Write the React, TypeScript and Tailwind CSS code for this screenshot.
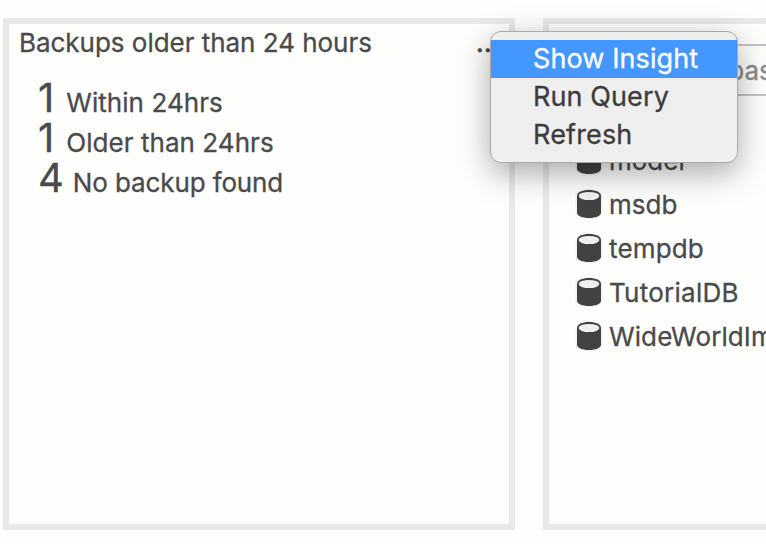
import React from "react";

const insights = [
  { count: "1", label: "Within 24hrs", gap: "gap-[12px]", spacing: "tracking-[0.05px]" },
  { count: "1", label: "Older than 24hrs", gap: "gap-[12px]", spacing: "tracking-[0.05px]" },
  { count: "4", label: "No backup found", gap: "gap-[9px]", spacing: "tracking-[-0.12px]" },
];

const databases = [
  { name: "master", spacing: "tracking-normal" },
  { name: "model", spacing: "tracking-normal" },
  { name: "msdb", spacing: "tracking-normal" },
  { name: "tempdb", spacing: "tracking-[0.15px]" },
  { name: "TutorialDB", spacing: "tracking-[0.25px]" },
  { name: "WideWorldImporters", spacing: "tracking-[0.1px]" },
];

function DatabaseIcon() {
  return (
    <svg className="h-7 w-6 shrink-0 overflow-visible" viewBox="0 0 24 28">
      <path d="M0 6C0 2.200 5 0 12 0s12 2.200 12 6v16.500C24 25.800 19 28 12 28S0 25.800 0 22.500Z" fill="#424242" stroke="#f3f2f4" strokeWidth="3" paintOrder="stroke" />
      <ellipse cx="12" cy="6" rx="10.300" ry="4.100" fill="#f0eff1" />
    </svg>
  );
}

function ContextMenu() {
  return (
    <div className="absolute left-[490px] top-[31px] h-[132px] w-[248px] rounded-[11px] border border-[#aaa] bg-[#efefef] pt-2 text-[27px] leading-[38px] text-[#3c3c3c] shadow-[0_10px_32px_rgba(0,0,0,0.34)]">
      <div className="h-[38px] bg-[#4497ff] pl-[42px] text-white"><span className="tracking-[0.1px]">Show Insight</span></div>
      <div className="h-[38px] pl-[42px]"><span className="tracking-[0.1px]">Run Query</span></div>
      <div className="h-[38px] pl-[42px]"><span className="tracking-[0.15px]">Refresh</span></div>
    </div>
  );
}

export default function App() {
  return (
    <div className="relative h-[544px] w-[766px] overflow-hidden bg-[#fefefd] font-[Inter,sans-serif] text-[26px] text-[#4a4a4a] [-webkit-text-stroke:0.3px]">
      <div className="flex gap-7 pl-[3px] pt-[18px]">
        <section className="h-[512px] w-[512px] shrink-0 border-[6px] border-[#e9e9e9]">
          <header className="flex h-[38px] justify-between pl-[10px] leading-[38px]">
            <h2 className="tracking-[-0.03px]">Backups older than 24 hours</h2>
            <span className="pr-[9px] tracking-[0.5px] [-webkit-text-stroke:0.8px]">...</span>
          </header>
          <ul className="pl-[29px] pt-4">
            {insights.map((item) => (
              <li key={item.label} className={`flex h-10 items-baseline whitespace-nowrap leading-10 ${item.gap}`}>
                <span className="text-[40px]">{item.count}</span>
                <span className={item.spacing}>{item.label}</span>
              </li>
            ))}
          </ul>
        </section>
        <section className="h-[512px] w-[512px] shrink-0 border-[6px] border-[#e9e9e9] pl-7 pt-5">
          <div className="h-[52px] w-[430px] border-2 border-[#c4c4c4] pl-[2px] leading-[50px] text-[#8c8c8c]">
            Search databases
          </div>
          <ul className="-mt-0.5">
            {databases.map((database) => (
              <li key={database.name} className="flex h-11 items-center gap-2 whitespace-nowrap">
                <DatabaseIcon />
                <span className={database.spacing}>{database.name}</span>
              </li>
            ))}
          </ul>
        </section>
      </div>
      <ContextMenu />
    </div>
  );
}
